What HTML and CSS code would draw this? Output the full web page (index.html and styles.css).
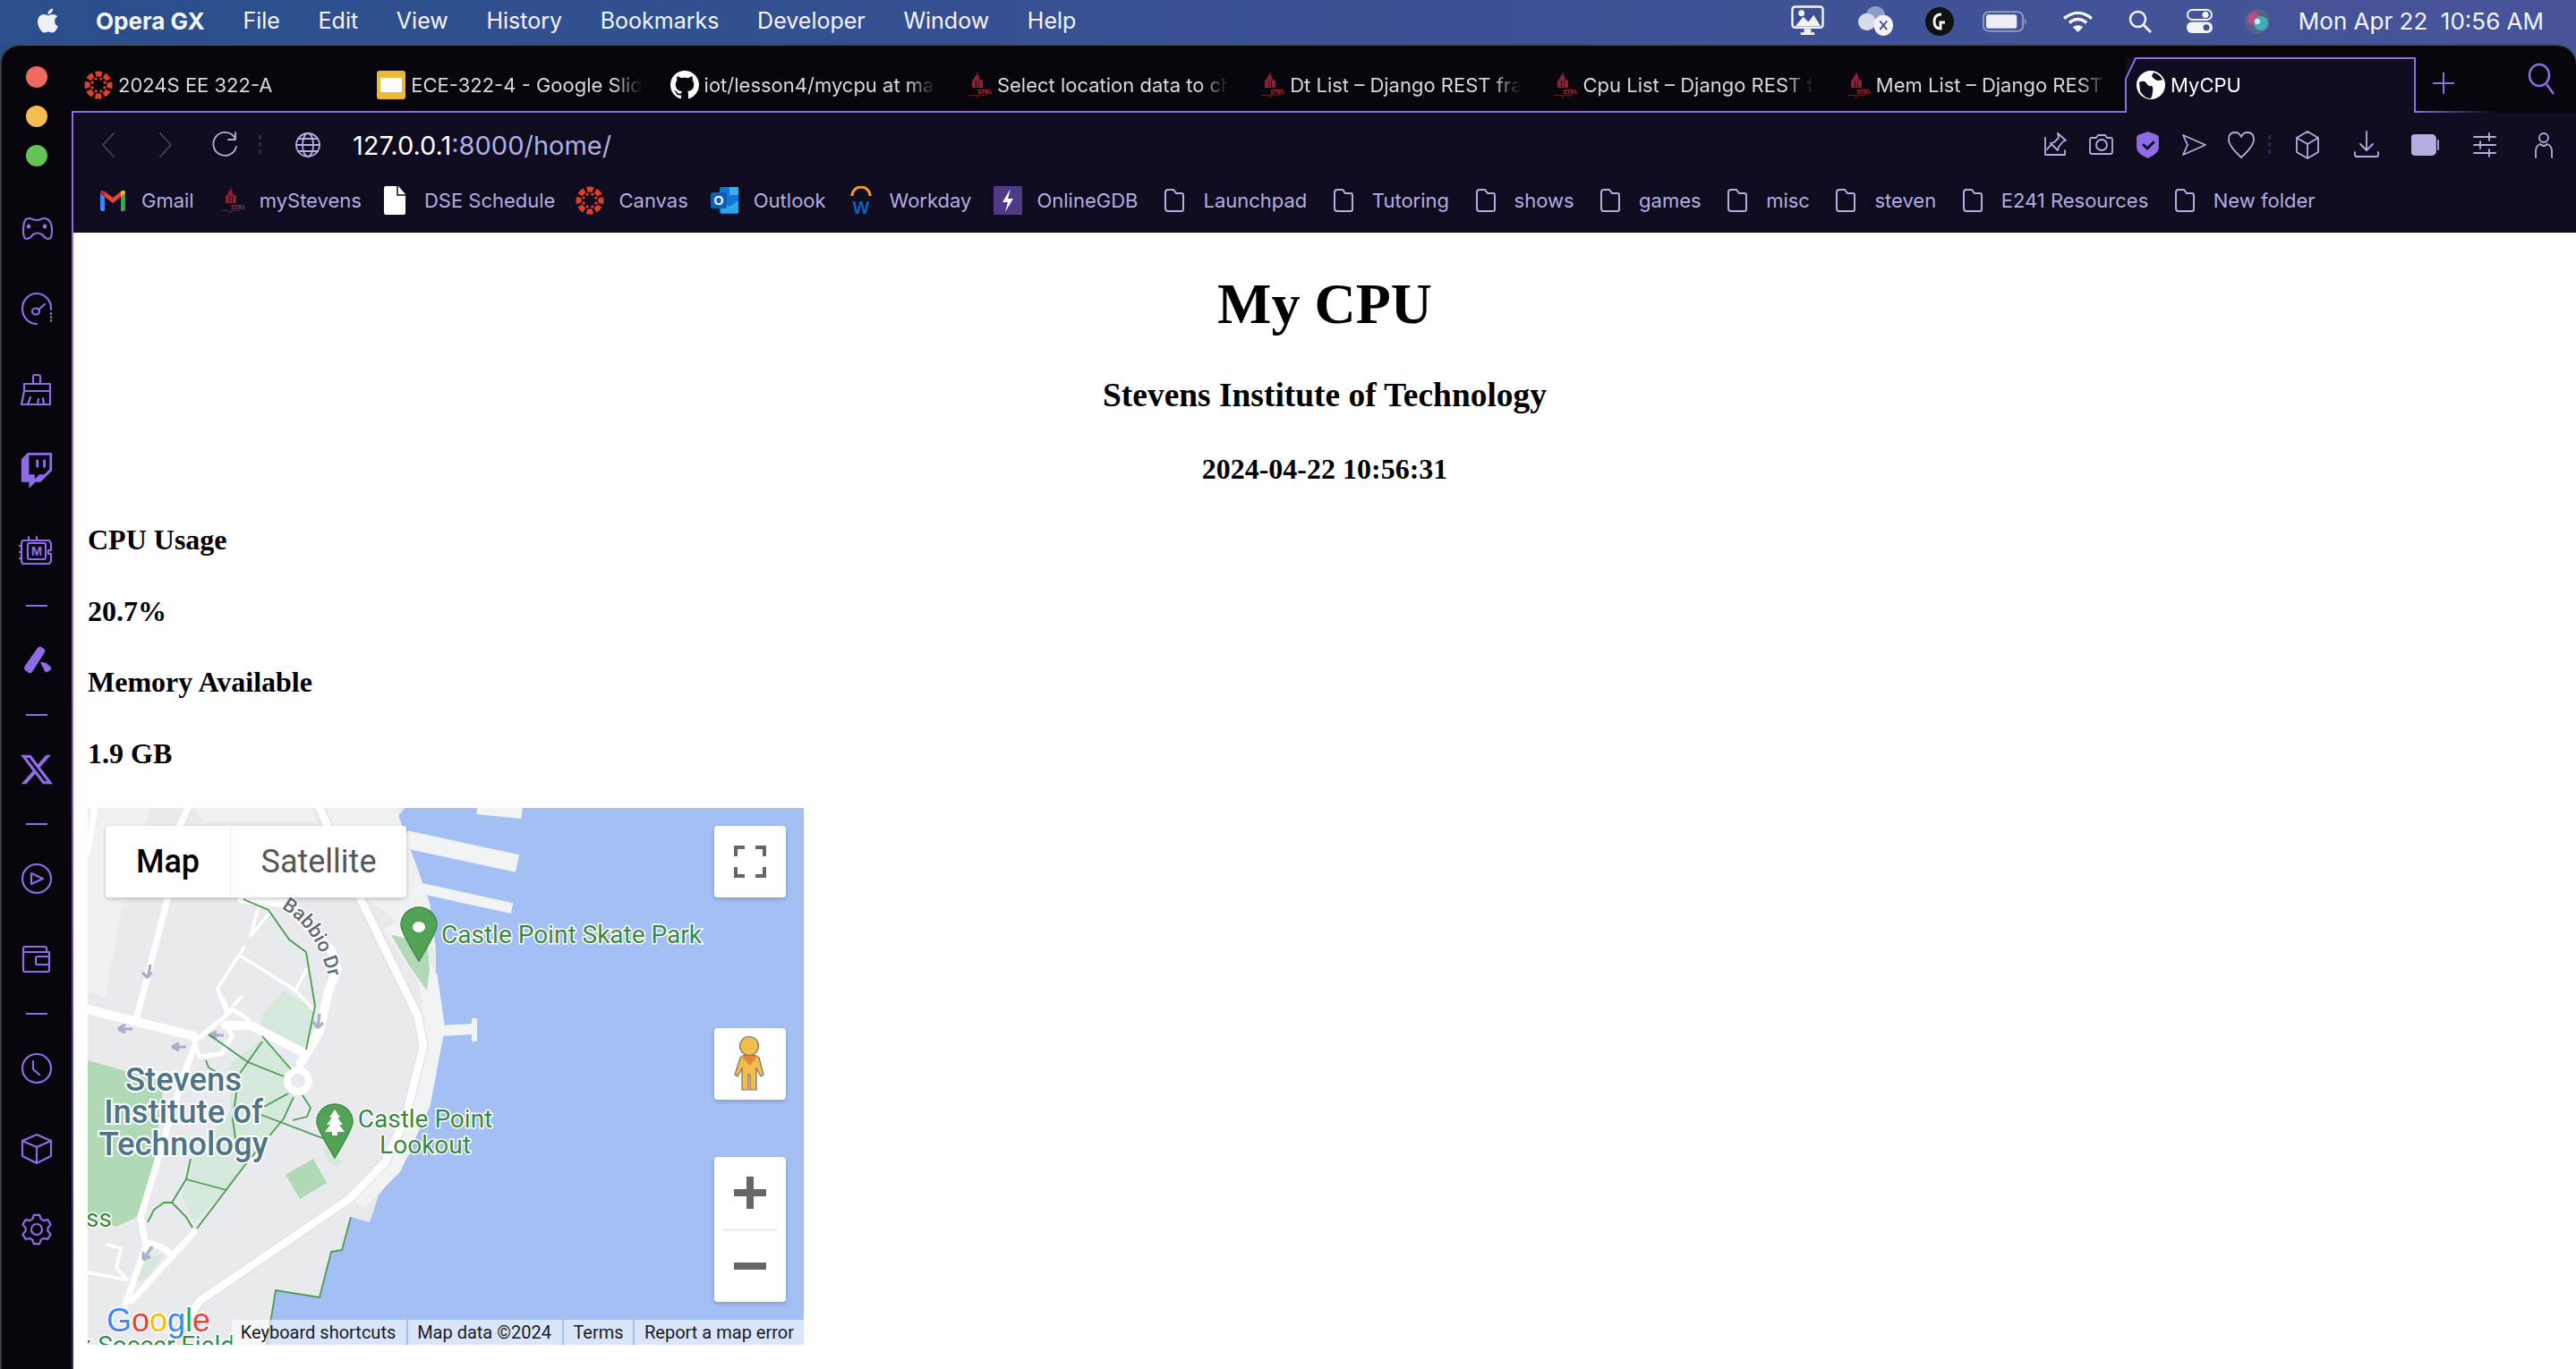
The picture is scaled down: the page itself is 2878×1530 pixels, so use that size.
FILE: index.html
```html
<!DOCTYPE html>
<html lang="en">
<head>
<meta charset="utf-8">
<title>MyCPU</title>
<link rel="stylesheet" href="styles.css">
</head>
<body>
<svg class="defs" width="0" height="0" aria-hidden="true">
  <defs>
    <symbol id="canvas" viewBox="0 0 32 32">
      <circle cx="16" cy="16" r="12.500" fill="none" stroke="#e13f2b" stroke-width="6" stroke-dasharray="6.800 3" stroke-dashoffset="23"/>
      <g fill="#e13f2b"><circle cx="22.900" cy="18.900" r="1.600"/><circle cx="22.900" cy="13.100" r="1.600"/><circle cx="9.100" cy="18.900" r="1.600"/><circle cx="9.100" cy="13.100" r="1.600"/><circle cx="18.900" cy="22.900" r="1.600"/><circle cx="13.100" cy="22.900" r="1.600"/><circle cx="18.900" cy="9.100" r="1.600"/><circle cx="13.100" cy="9.100" r="1.600"/></g>
    </symbol>
    <symbol id="stevens" viewBox="0 0 32 32">
      <path d="M16 0l1 5 1 1v3l4 2v8H10v-8l3-3V6l2-1z" fill="#8f1f30"/>
      <path d="M14 11h1v7h-1zM17 11h1v7h-1z" fill="#120a14"/>
      <text x="16" y="25.500" class="stevens-word" textLength="31">STEVENS</text>
      <rect x="6" y="27" width="20" height="1" fill="#5a1a26"/><rect x="14" y="29" width="4" height="1" fill="#5a1a26"/>
    </symbol>
    <symbol id="folder" viewBox="0 0 24 28">
      <path d="M2 5a3 3 0 0 1 3-3h6l3 4h6a2 2 0 0 1 2 2v16a2 2 0 0 1-2 2H5a3 3 0 0 1-3-3z" fill="none" stroke="#b3aee0" stroke-width="2"/>
    </symbol>
    <symbol id="pegman" viewBox="0 0 80 80">
      <path d="M29 33q3-3 8-3h5q5 0 8 3l5 19-3 2-5-9v24h-7V52h-2v17h-7V45l-5 9-3-2z" fill="#f2bd4a" stroke="#77736a" stroke-width="1.200"/>
      <path d="M30 31h19l-9.500 11z" fill="#dd8a3c"/>
      <circle cx="39" cy="20" r="10.500" fill="#f2bd4a" stroke="#77736a" stroke-width="1.200"/>
    </symbol>
  </defs>
</svg>

<header class="menubar">
  <svg class="apple" viewBox="3 3 18 18"><path d="M17.050 20.280c-.98.95-2.050.8-3.080.35-1.090-.46-2.090-.48-3.240 0-1.440.62-2.200.44-3.060-.35C2.790 15.250 3.510 7.590 9.050 7.310c1.350.07 2.290.74 3.080.8 1.180-.24 2.310-.93 3.570-.84 1.510.12 2.650.72 3.400 1.800-3.120 1.870-2.380 5.980.48 7.130-.57 1.500-1.310 2.990-2.540 4.090zM12.030 7.250c-.15-2.230 1.660-4.070 3.740-4.250.29 2.580-2.340 4.500-3.740 4.250z"/></svg>
  <nav class="menus">
    <span class="menu-app">Opera GX</span>
    <span>File</span><span>Edit</span><span>View</span><span>History</span><span>Bookmarks</span><span>Developer</span><span>Window</span><span>Help</span>
  </nav>
  <div class="tray">
    <svg class="tray-mon" viewBox="0 0 38 36"><rect x="1.500" y="1.500" width="35" height="24" rx="3" fill="#3f4f93" stroke="#f2f2f7" stroke-width="2.500"/><path d="M5 24l9-11 6 6 6-8 8 13z" fill="#f2f2f7"/><circle cx="12" cy="9" r="3.500" fill="#f2f2f7"/><path d="M15 27h8v4h4v3H11v-3h4z" fill="#f2f2f7"/></svg>
    <svg class="tray-cloud" viewBox="0 0 42 36"><circle cx="21" cy="12" r="11" fill="#8f9cc9"/><circle cx="11" cy="19" r="10" fill="#d7dbeb"/><ellipse cx="30" cy="23" rx="11" ry="12" fill="#f2f2f7"/><path d="M26 18l8 10M34 18l-8 10" stroke="#3f4f93" stroke-width="2" fill="none"/></svg>
    <svg class="tray-g" viewBox="0 0 32 32"><circle cx="16" cy="16" r="16" fill="#111"/><path d="M18 8q-8 0-8 8t7 8v-7h5" fill="none" stroke="#f2f2f7" stroke-width="3"/></svg>
    <svg class="tray-batt" viewBox="0 0 52 24"><rect x="1" y="1" width="45" height="22" rx="6" fill="none" stroke="#a6abd0" stroke-width="1.500"/><rect x="4" y="4" width="35" height="16" rx="3" fill="#eeeef6"/><path d="M48 8q3 4 0 8z" fill="#a6abd0"/></svg>
    <svg class="tray-wifi" viewBox="0 0 36 26"><path d="M2 10q16-13 32 0M8 15q10-8 20 0" fill="none" stroke="#f7f7fb" stroke-width="3.500"/><path d="M12 20q6-4 12 0l-6 6z" fill="#f7f7fb"/></svg>
    <svg class="tray-search" viewBox="0 0 26 26"><circle cx="10.500" cy="10.500" r="8.500" fill="none" stroke="#f2f2f7" stroke-width="2.500"/><path d="M17 17l8 8" stroke="#f2f2f7" stroke-width="3"/></svg>
    <svg class="tray-ctrl" viewBox="0 0 29 27"><rect x="1" y="1" width="27" height="11" rx="5.500" fill="none" stroke="#f2f2f7" stroke-width="2"/><circle cx="21" cy="6.500" r="3.500" fill="#f2f2f7"/><rect x="0" y="14.500" width="29" height="12.500" rx="6" fill="#f2f2f7"/><circle cx="22" cy="20.700" r="3.500" fill="#3f4f93"/></svg>
    <svg class="tray-siri" viewBox="0 0 28 28"><circle cx="14" cy="14" r="14" fill="#5a5f88"/><circle cx="10" cy="11" r="7" fill="#c2468c"/><circle cx="18" cy="16" r="8" fill="#3bb0b8"/><circle cx="14" cy="14" r="3" fill="#e6e9f5"/></svg>
    <span class="clock">Mon Apr 22&nbsp;&nbsp;10:56 AM</span>
  </div>
</header>

<div class="window">
  <aside class="side">
    <div class="lights"><i class="light light-red"></i><i class="light light-yellow"></i><i class="light light-green"></i></div>
    <svg class="side-icon" viewBox="0 0 40 40"><path d="M8 9q4-2 7 0 5 2 10 0 3-2 7 0 5 3 5 13 0 9-4 9-3 0-7-5-5-3-10 0-4 5-7 5-4 0-4-9 0-10 3-13z"/><circle cx="11" cy="17" r="1.300" class="dot"/><circle cx="29" cy="17" r="1.300" class="dot"/></svg>
    <svg class="side-icon" viewBox="0 0 40 40"><path d="M36 20A16 17 0 1 0 20 36"/><ellipse cx="19" cy="22" rx="4" ry="3.500"/><path d="M22 20l7-6"/><path d="M36 24v1M36 28v1M36 32v1"/></svg>
    <svg class="side-icon" viewBox="0 0 40 40"><rect x="16" y="3" width="8" height="10" rx="2"/><path d="M6 13h29v8H6zM6 21l-3 15h32V21M10 36l3-8M21 36l1-6M28 36l-1-7"/></svg>
    <svg class="side-icon side-fill" viewBox="0 0 24 24"><path d="M11.571 4.714h1.715v5.143H11.570zm4.715 0H18v5.143h-1.714zM6 0L1.714 4.286v15.428h5.143V24l4.286-4.286h3.428L22.286 12V0zm14.571 11.143l-3.428 3.428h-3.429l-3 3v-3H6.857V1.714h13.714Z"/></svg>
    <svg class="side-icon" viewBox="0 0 40 40"><path d="M4 8h30l2 3v8h-3v4h3v8l-2 3H4l-1-3V11z"/><rect x="10" y="11" width="20" height="18" rx="2"/><path d="M3 14H0M3 21H0M3 28H0M11 8V4M20 8V4"/><text x="20" y="25" class="ram-letter">M</text></svg>
    <i class="side-sep"></i>
    <svg class="side-icon side-fill" viewBox="0 0 40 40"><path d="M7 26L21 6q2-2 4-1l3 2q2 2 1 4L15 33q-2 2-4 1l-4-3q-2-2 0-5z"/><path d="M24 22q7-1 12 6 1 2-1 3l-3 2q-2 1-3-1z"/></svg>
    <i class="side-sep"></i>
    <svg class="side-icon side-fill" viewBox="0 0 24 24"><path d="M18.244 2.250h3.308l-7.227 8.260 8.502 11.240H16.170l-5.214-6.817L4.990 21.750H1.680l7.730-8.835L1.254 2.250H8.080l4.713 6.231zm-1.161 17.520h1.833L7.084 4.126H5.117z"/></svg>
    <i class="side-sep"></i>
    <svg class="side-icon" viewBox="0 0 40 40"><circle cx="20" cy="20" r="16"/><path d="M14 14l13 6-13 6z"/></svg>
    <svg class="side-icon" viewBox="0 0 40 40"><path d="M31 12V8q0-2-2-2H7q-2 0-2 2v24q0 2 2 2h25q2 0 2-2V12H7"/><rect x="19" y="17" width="15" height="9" rx="2"/></svg>
    <i class="side-sep"></i>
    <svg class="side-icon" viewBox="0 0 40 40"><circle cx="20" cy="20" r="16"/><path d="M16 12v9l7 6"/></svg>
    <svg class="side-icon" viewBox="0 0 40 40"><path d="M20 4l16 7v17l-16 8-16-8V11zM4 11l16 7 16-7M20 18v18"/></svg>
    <svg class="side-icon" viewBox="0 0 40 40"><path d="M15.300 8.400L16.850 3.800H23.150L24.700 8.400L27.700 10.150L32.450 9.200L35.600 14.600L32.400 18.260V21.740L35.600 25.400L32.450 30.800L27.700 29.850L24.700 31.600L23.150 36.200H16.850L15.300 31.600L12.300 29.850L7.550 30.800L4.400 25.400L7.600 21.740V18.260L4.400 14.600L7.550 9.200L12.300 10.150z"/><circle cx="20" cy="20" r="6"/></svg>
  </aside>

  <div class="main">
    <div class="tabstrip">
      <div class="tab"><svg class="fav"><use href="#canvas"/></svg><span class="tab-title">2024S EE 322-A</span></div>
      <div class="tab"><svg class="fav" viewBox="0 0 32 32"><rect width="32" height="32" rx="3" fill="#eab93a"/><rect x="4" y="8" width="24" height="16" fill="#fff"/></svg><span class="tab-title">ECE-322-4 - Google Slides</span></div>
      <div class="tab"><svg class="fav" viewBox="0 0 16 16"><path fill="#fff" d="M8 0C3.580 0 0 3.580 0 8c0 3.540 2.290 6.530 5.470 7.590.4.070.55-.17.55-.38 0-.19-.01-.82-.01-1.490-2.010.37-2.530-.49-2.690-.94-.09-.23-.48-.94-.82-1.130-.28-.15-.68-.52-.01-.53.63-.01 1.080.58 1.230.82.72 1.210 1.870.87 2.330.66.070-.52.28-.87.51-1.070-1.780-.2-3.640-.89-3.640-3.950 0-.87.31-1.590.82-2.150-.08-.2-.36-1.020.08-2.120 0 0 .67-.21 2.200.82.64-.18 1.320-.27 2-.27.68 0 1.360.09 2 .27 1.530-1.040 2.200-.82 2.200-.82.44 1.100.16 1.920.08 2.120.51.56.82 1.270.82 2.150 0 3.070-1.870 3.750-3.650 3.950.29.25.54.73.54 1.480 0 1.070-.01 1.930-.01 2.200 0 .21.15.46.55.38A8.013 8.013 0 0016 8c0-4.420-3.580-8-8-8z"/></svg><span class="tab-title">iot/lesson4/mycpu at master · steven</span></div>
      <div class="tab"><svg class="fav"><use href="#stevens"/></svg><span class="tab-title">Select location data to change</span></div>
      <div class="tab"><svg class="fav"><use href="#stevens"/></svg><span class="tab-title">Dt List – Django REST framework</span></div>
      <div class="tab"><svg class="fav"><use href="#stevens"/></svg><span class="tab-title">Cpu List – Django REST framework</span></div>
      <div class="tab"><svg class="fav"><use href="#stevens"/></svg><span class="tab-title">Mem List – Django REST framework</span></div>
      <div class="tab tab-active">
        <svg class="tab-outline" viewBox="0 0 324 62" preserveAspectRatio="none"><path d="M-6 61H0V24L11 1H323V61H330" fill="none" stroke="#8f6be6" stroke-width="2"/></svg>
        <svg class="fav" viewBox="0 0 32 32"><circle cx="16" cy="16" r="16" fill="#fff"/><path d="M3 13q6-3 8 1t5 3 2 7-3 7Q8 30 4 23zM19 2q7 2 10 8-5 2-8 0t-4-4z" fill="#0e0c1e"/></svg>
        <span class="tab-title tab-title-active">MyCPU</span>
      </div>
      <svg class="tab-plus" viewBox="0 0 26 26"><path d="M13 1v24M1 13h24"/></svg>
      <svg class="tab-search" viewBox="0 0 30 36"><ellipse cx="13" cy="14" rx="11" ry="12"/><path d="M21 24l8 11"/></svg>
    </div>

    <div class="pane">
      <div class="toolbar">
        <div class="address-row">
          <svg class="tool tool-dim" viewBox="0 0 32 32"><path d="M22 3L10 16l12 13"/></svg>
          <svg class="tool tool-dim tool-forward" viewBox="0 0 32 32"><path d="M10 3l12 13-12 13"/></svg>
          <svg class="tool tool-reload" viewBox="0 0 32 32"><path d="M27 9a13 13 0 1 0 1 9M27 2v8h-8"/></svg>
          <i class="vdots vdots-left"></i>
          <svg class="tool tool-globe" viewBox="0 0 32 32"><circle cx="16" cy="16" r="13"/><ellipse cx="16" cy="16" rx="6" ry="13"/><path d="M3 16h26M5 9h22M5 23h22"/></svg>
          <div class="url"><b>127.0.0.1</b>:8000/home/</div>
          <div class="tools-a">
            <svg class="tool" viewBox="0 0 32 32"><path d="M5 8v19h22v-5M19 3l9 8-3 1-5 6-1 4-8-8 4-1 5-5zM12 15l-5 6"/></svg>
            <svg class="tool" viewBox="0 0 32 32"><path d="M3 10q0-2 2-2h5l2-3h8l2 3h4q2 0 2 2v14q0 2-2 2H5q-2 0-2-2z"/><circle cx="16" cy="16" r="6"/></svg>
            <svg class="tool" viewBox="0 0 32 32"><path class="shield" d="M15.500 2l9 3q2.500 1 2.500 3v11q0 6-11.500 11Q4 25 4 19V8q0-2 2.500-3z"/><path class="shield-check" d="M11 16l4 4 7-7"/></svg>
            <svg class="tool" viewBox="0 0 32 32"><path d="M3 5l25 11L3 27l5-11z"/></svg>
            <svg class="tool" viewBox="0 0 32 32"><path d="M16 30Q2 17 2 10 2 2 9 2q5 0 7 5 2-5 7-5 7 0 7 8 0 7-14 20z"/></svg>
          </div>
          <i class="vdots vdots-right"></i>
          <div class="tools-b">
            <svg class="tool" viewBox="0 0 32 32"><path d="M16 1l12 7v16l-12 7-12-7V8zM4 8l12 7 12-7M16 15v16"/></svg>
            <svg class="tool" viewBox="0 0 32 32"><path d="M16 1v21M9 15l7 7 7-7M3 24v3q0 2 2 2h22q2 0 2-2v-3"/></svg>
            <svg class="tool" viewBox="0 0 32 32"><rect class="batt" x="0" y="5" width="27" height="22" rx="4"/><path d="M30 11v10"/></svg>
            <svg class="tool" viewBox="0 0 32 32"><path d="M4 7h24M4 16h24M4 25h24M21 3v8M11 12v8M21 21v8"/></svg>
            <svg class="tool" viewBox="0 0 32 32"><circle cx="16" cy="8" r="5"/><path d="M7 30v-7q0-6 5-8 4 4 8 0 5 2 5 8v7"/></svg>
          </div>
        </div>
        <div class="bookmarks">
          <a class="bm"><svg class="bm-icon" viewBox="0 0 28 24"><path d="M0 4l5 4v16H2q-2 0-2-2z" fill="#4285f4"/><path d="M28 4l-5 4v16h3q2 0 2-2z" fill="#34a853"/><path d="M5 8V2l9 7 9-7v6l-9 7z" fill="#ea4335"/><path d="M0 4q0-4 3-3l2 1v6z" fill="#c5221f"/><path d="M28 4q0-4-3-3l-2 1v6z" fill="#fbbc04"/></svg>Gmail</a>
          <a class="bm"><svg class="bm-icon bm-icon-tall"><use href="#stevens"/></svg>myStevens</a>
          <a class="bm bm-doc"><svg class="bm-icon bm-icon-doc" viewBox="0 0 24 32"><path d="M2 0h14l8 9v21q0 2-2 2H2q-2 0-2-2V2q0-2 2-2z" fill="#fff"/><path d="M15 0v10h9" fill="none" stroke="#0e0c1e" stroke-width="1.500"/></svg>DSE Schedule</a>
          <a class="bm"><svg class="bm-icon bm-icon-tall"><use href="#canvas"/></svg>Canvas</a>
          <a class="bm"><svg class="bm-icon bm-icon-tall" viewBox="0 0 32 32"><rect x="10" y="1" width="21" height="30" rx="2" fill="#0f78d4"/><path d="M21 1h10v9H21z" fill="#35aeea"/><path d="M10 16l11 7 10-7v14H12z" fill="#28a8ea"/><rect y="7" width="18" height="18" rx="2" fill="#0a5fb3"/><text x="9" y="21" class="outlook-letter">O</text></svg>Outlook</a>
          <a class="bm"><svg class="bm-icon" viewBox="0 0 26 32"><path d="M3 11a10 10 0 0 1 20 0" fill="none" stroke="#f19a2a" stroke-width="3"/><text x="13" y="31" class="workday-letter">W</text></svg>Workday</a>
          <a class="bm bm-gdb"><svg class="bm-icon bm-icon-tall" viewBox="0 0 32 32"><rect width="32" height="32" fill="#4f3b85"/><path d="M19 3l-9 15h6l-3 11 9-15h-6z" fill="#fff"/></svg>OnlineGDB</a>
          <a class="bm bm-dir"><svg class="bm-folder"><use href="#folder"/></svg>Launchpad</a>
          <a class="bm bm-dir"><svg class="bm-folder"><use href="#folder"/></svg>Tutoring</a>
          <a class="bm bm-dir"><svg class="bm-folder"><use href="#folder"/></svg>shows</a>
          <a class="bm bm-dir"><svg class="bm-folder"><use href="#folder"/></svg>games</a>
          <a class="bm bm-dir"><svg class="bm-folder"><use href="#folder"/></svg>misc</a>
          <a class="bm bm-dir"><svg class="bm-folder"><use href="#folder"/></svg>steven</a>
          <a class="bm bm-dir"><svg class="bm-folder"><use href="#folder"/></svg>E241 Resources</a>
          <a class="bm bm-dir"><svg class="bm-folder"><use href="#folder"/></svg>New folder</a>
        </div>
      </div>

      <main class="page">
        <h1>My CPU</h1>
        <h3>Stevens Institute of Technology</h3>
        <h4 class="center">2024-04-22 10:56:31</h4>
        <h4>CPU Usage</h4>
        <h4>20.7%</h4>
        <h4>Memory Available</h4>
        <h4>1.9 GB</h4>
        <div class="map">
          <svg class="map-art" viewBox="0 0 800 600" width="800" height="600">
            <rect width="800" height="600" class="water"/>
            <path class="land" d="M0 0H354L345 12L355 33L364 55L375 86L382 106L389 159L389 221L395 245L394 266L382 327L359 388L325 433L315 463L294 457L284 494L272 496L259 547L210 539L200 600H0Z"/>
            <path class="land-light" d="M0 0H70L40 100L20 212L0 205ZM262 0H345L355 33L382 106L389 159L310 100ZM120 0H250L255 15H130Z"/>
            <path class="shore" d="M340 130L380 190L388 245L372 330L340 400L300 440"/>
            <path class="pier" d="M364 88L474 112M435 1L485 6M395 249L430 247"/>
            <path class="pier-wide" d="M355 35L480 62"/>
            <path class="pier-cap" d="M429 235h6v26h-6z"/>
            <path class="park" d="M0 282L85 306L75 396L55 457L32 468L0 457ZM215 219L225 229L214 241L204 233ZM252 392L267 419L237 437L221 410Z"/>
            <path class="park" d="M339 142L379 151L382 180L379 204L359 176Z"/>
            <path class="park-light" d="M219 204L252 225L242 270L195 255L194 233ZM159 286L195 257L235 298L225 335L179 396L152 429L119 463L105 433L119 388L159 339ZM54 531L64 504L85 498L69 523ZM263 380L285 395L277 402L265 390Z"/>
            <path class="road-case" d="M259 0L305 102L369 233L375 266L355 347L332 396L292 437L125 551L90 600"/>
            <path class="road road-main" d="M259 0L305 102L369 233L375 266L355 347L332 396L292 437L125 551L90 600"/>
            <path class="road road-mid" d="M0 225L119 255M154 243L182 243L242 274M259 249L269 204L279 180L272 159L219 106L172 102M259 249L238 285"/>
            <path class="road road-side" d="M89 102L55 233M112 0L102 21M8 0L0 49M120 265L105 305L59 457L65 490L42 555M119 474L49 551M65 486Q82 488 92 498"/>
            <path class="road road-loop" d="M119 261L125 278L149 275L162 255L154 243M119 261L139 245L162 225L179 236"/>
            <path class="road road-thin" d="M145 202L175 155M172 166L232 204L252 225M145 202L155 229M232 204L245 180M192 106L182 143L205 115M0 519L42 527M22 488L37 492L32 514L44 527M151 212L158 228M163 220L172 211"/>
            <circle class="road-ring" cx="235" cy="305" r="12"/>
            <path class="arrow" d="M70 175L67 190M67 190l-6-6M67 190l4-7M50 247H34M34 247l8-5M34 247l8 4M110 267H94M94 267l8-4M94 267l8 4M152 254H136M136 254l8-4M136 254l8 4M259 230L257 246M257 246l-5-7M257 246l6-6M72 490L62 505M62 505l0-9M62 505l8-4"/>
            <path class="trail" d="M174 102L202 114L225 147L244 161L254 221L244 270M135 253L179 284L219 300M195 255L227 292M195 261L169 298L162 347L165 370M224 319L195 335M194 343L265 370M230 323L219 347L175 400L122 470M240 321L249 335L245 345L229 349M115 392L110 415L94 441L85 441L74 449L67 463M110 415L155 427M94 441L110 457L117 469M132 282L135 290L160 305M294 457L284 494L272 496L259 547L210 539L200 600"/>
            <text x="107" y="316" class="label-campus">Stevens</text>
            <text x="107" y="352" class="label-campus">Institute of</text>
            <text x="107" y="388" class="label-campus">Technology</text>
            <text x="395" y="151" class="label-poi">Castle Point Skate Park</text>
            <text x="377" y="357" class="label-poi label-mid">Castle Point</text>
            <text x="377" y="386" class="label-poi label-mid">Lookout</text>
            <text x="-2" y="468" class="label-poi">ss</text>
            <path id="babbio" d="M216 112Q262 138 272 206" fill="none"/>
            <text class="label-road"><textPath href="#babbio">Babbio Dr</textPath></text>
            <path class="pin" d="M370 171Q350 138 350 131a20 20 0 0 1 40 0Q390 138 370 171z"/>
            <ellipse cx="370" cy="133" rx="7" ry="6" class="pin-hole"/>
            <path class="pin" d="M276 391Q256 358 256 351a20 20 0 0 1 40 0Q296 358 276 391z"/>
            <path class="pin-hole" d="M276 337l6 9h-3l6 8h-4l6 8h-8v4h-6v-4h-8l6-8h-4l6-8h-3z"/>
            <text x="-10" y="610" class="label-poi">k Soccer Field</text>
            <text x="21" y="585" class="google"><tspan class="g-blue">G</tspan><tspan class="g-red">o</tspan><tspan class="g-yellow">o</tspan><tspan class="g-blue">g</tspan><tspan class="g-green">l</tspan><tspan class="g-red">e</tspan></text>
          </svg>
          <div class="map-type">
            <span class="map-tab map-tab-on">Map</span><span class="map-tab map-tab-sat">Satellite</span>
          </div>
          <div class="map-btn map-full">
            <svg viewBox="0 0 80 80" width="80" height="80"><path class="glyph" d="M22 34V22H34V26H26V34ZM46 22H58V34H54V26H46ZM22 46H26V54H34V58H22ZM54 46H58V58H46V54H54Z"/></svg>
          </div>
          <div class="map-btn map-peg"><svg width="80" height="80"><use href="#pegman"/></svg></div>
          <div class="map-btn map-zoom">
            <svg viewBox="0 0 80 162" width="80" height="162"><path class="glyph" d="M36 22H44V36H58V44H44V58H36V44H22V36H36ZM22 118H58V126H22Z"/><path d="M10 81.500H70" stroke="#e6e6e6" stroke-width="2"/></svg>
          </div>
          <div class="map-foot">
            <span class="foot-k">Keyboard shortcuts</span><span class="foot-d">Map data ©2024</span><span class="foot-t">Terms</span><span class="foot-r">Report a map error</span>
          </div>
        </div>
      </main>
    </div>
  </div>
</div>
</body>
</html>
```
FILE: styles.css
```css
* { box-sizing: border-box; }
html, body { margin: 0; height: 1530px; overflow: hidden; }
body {
  display: flex; flex-direction: column;
  background: linear-gradient(90deg, #294f8c 0%, #3b5195 55%, #47549a 100%);
  font-family: Inter, "Liberation Sans", sans-serif;
}
.defs { position: absolute; }

/* macOS menu bar */
.menubar { height: 49px; flex: none; display: flex; align-items: center; color: #f4f4fa; font-size: 25px; padding: 0 36px 2px 40px; }
.apple { width: 27px; height: 32px; fill: #eef0f6; flex: none; margin-bottom: 1px; }
.menus { display: flex; gap: 42.700px; margin-left: 40px; white-space: nowrap; }
.menu-app { font-weight: 700; font-size: 26px; }
.tray { margin-left: auto; display: flex; align-items: center; font-size: 26px; }
.tray svg { flex: none; }
.tray-mon { width: 37px; height: 35px; margin-right: 37px; }
.tray-cloud { width: 41px; height: 35px; margin-right: 35px; }
.tray-g { width: 32px; height: 32px; margin-right: 32px; }
.tray-batt { width: 51px; height: 24px; margin-right: 38px; }
.tray-wifi { width: 35px; height: 25px; margin-right: 39px; }
.tray-search { width: 26px; height: 26px; margin-right: 39px; }
.tray-ctrl { width: 29px; height: 27px; margin-right: 36px; }
.tray-siri { width: 28px; height: 28px; margin-right: 32px; }
.clock { white-space: pre; }

/* window */
.window { flex: 1; display: flex; min-height: 0; background: #07060c; border-top: 2px solid #4b4b50; border-left: 2px solid #3a3a3e; border-radius: 22px 22px 0 0; overflow: hidden; }
.side { width: 78px; flex: none; display: flex; flex-direction: column; align-items: center; gap: 50px; padding-top: 23px; }
.lights { display: flex; flex-direction: column; gap: 20px; }
.light { width: 24px; height: 24px; border-radius: 50%; display: block; }
.light-red { background: #ee6a5f; }
.light-yellow { background: #f5bd4f; }
.light-green { background: #61c454; }
.side-icon { width: 40px; height: 40px; flex: none; fill: none; stroke: #8f6be6; stroke-width: 2.200; stroke-linejoin: round; stroke-linecap: round; }
.side-fill { fill: #8f6be6; stroke: none; }
.side-icon .dot { fill: #8f6be6; }
.ram-letter { font: 700 13px Inter, sans-serif; fill: #8f6be6; stroke: none; text-anchor: middle; }
.side-sep { width: 24px; height: 2px; flex: none; background: #8f6be6; margin: -10px 0; }

.main { flex: 1; min-width: 0; display: flex; flex-direction: column; }

/* tab strip */
.tabstrip { height: 75px; flex: none; display: flex; align-items: flex-end; padding-left: 2px; background: linear-gradient(90deg, #8f6be6 0, #8f6be6 2618px, transparent 2710px) left bottom / 100% 2px no-repeat; }
.tab { width: 327.300px; height: 60px; flex: none; display: flex; align-items: center; gap: 6px; padding: 0 0 2px 12px; font-size: 22px; color: #d9d7de; white-space: nowrap; }
.fav { width: 32px; height: 32px; flex: none; }
.tab-title { width: 258px; overflow: hidden; -webkit-mask-image: linear-gradient(90deg, #000 88%, transparent); mask-image: linear-gradient(90deg, #000 88%, transparent); }
.tab-active { width: 324px; height: 62px; margin-left: 2px; position: relative; background: #0e0c1e; padding: 0 0 0 12px; z-index: 1; color: #fff; }
.tab-outline { position: absolute; inset: 0; width: 100%; height: 100%; overflow: visible; }
.tab-title-active { position: relative; }
.tab-plus { width: 26px; height: 26px; margin: 0 0 20px 18px; flex: none; fill: none; stroke: #8f6be6; stroke-width: 2; }
.tab-search { width: 30px; height: 36px; margin: 0 24px 20px auto; flex: none; fill: none; stroke: #8f6be6; stroke-width: 2.500; }

.pane { flex: 1; min-height: 0; display: flex; flex-direction: column; border-left: 2px solid; border-image: linear-gradient(180deg, #8f6be6 0%, #8f6be6 45%, #3d2c66 100%) 1; }

/* toolbar */
.toolbar { height: 134px; flex: none; background: #0e0c1e; padding: 0 20px 0 23px; }
.address-row { height: 72px; display: flex; align-items: center; }
.tool { width: 32px; height: 32px; flex: none; fill: none; stroke: #b3aee0; stroke-width: 1.800; stroke-linejoin: round; stroke-linecap: round; }
.tool-dim { stroke: #47435f; }
.tool-forward { margin-left: 32px; }
.tool-reload { margin-left: 35px; }
.tool-globe { margin-left: 34px; }
.vdots { width: 3px; height: 22px; flex: none; background: repeating-linear-gradient(180deg, #2a2746 0 5px, transparent 5px 8px); }
.vdots-left { margin: 0 2px 0 21px; }
.vdots-right { margin: 0 25px 0 14px; }
.url { margin-left: 34px; font-size: 29px; color: #b3aee0; white-space: nowrap; }
.url b { font-weight: 400; color: #fff; }
.tools-a { margin-left: auto; display: flex; gap: 20px; }
.tools-b { display: flex; gap: 34px; }
.shield { fill: #8f6be6; stroke: #8f6be6; }
.shield-check { stroke: #0e0c1e; stroke-width: 3; }
.batt { fill: #b3aee0; }

.bookmarks { height: 52px; display: flex; align-items: center; gap: 25px; padding-left: 7px; font-size: 22px; color: #b3aee0; white-space: nowrap; }
.bm { display: flex; align-items: center; }
.bm-icon { width: 28px; height: 32px; flex: none; margin-right: 18px; }
.bm-icon-tall { width: 32px; margin-right: 16px; }
.bm-icon-doc { width: 24px; margin-right: 21px; }
.bm-doc { margin-right: -2px; }
.bm-gdb { margin-right: 4px; }
.bm-dir { margin-right: 3.500px; }
.bm-folder { width: 24px; height: 28px; flex: none; margin-right: 20px; }
.stevens-word { font: 700 7.500px "Liberation Sans", sans-serif; fill: #a62a3c; }
.outlook-letter { font: 700 14px "Liberation Sans", sans-serif; fill: #fff; text-anchor: middle; }
.workday-letter { font: 700 20px "Liberation Sans", sans-serif; fill: #0f5fb8; text-anchor: middle; }

/* page */
.page { flex: 1; min-height: 0; background: #fff; padding: 0 16px; color: #000; font-family: "Liberation Serif", serif; overflow: hidden; }
h1 { font-size: 64px; font-weight: 700; text-align: center; margin: 43px 0; }
h3 { font-size: 37.440px; font-weight: 700; text-align: center; margin: 37.440px 0; }
h4 { font-size: 32px; font-weight: 700; margin: 42.560px 0; }
.center { text-align: center; }

/* map */
.map { position: relative; width: 800px; height: 600px; overflow: hidden; font-family: Roboto, sans-serif; }
.map-art { display: block; }
.water { fill: #a3bff4; }
.land { fill: #e8eaed; }
.land-light { fill: #eff1f2; }
.shore { fill: none; stroke: #f1f3f4; stroke-width: 22; }
.pier { fill: none; stroke: #f1f3f4; stroke-width: 12; }
.pier-wide { fill: none; stroke: #f1f3f4; stroke-width: 20; }
.pier-cap { fill: #f1f3f4; }
.park { fill: #b0d9b5; }
.park-light { fill: #d4e8dc; }
.road { fill: none; stroke: #fff; stroke-linejoin: round; stroke-linecap: round; }
.road-case { fill: none; stroke: #dadce0; stroke-width: 11; stroke-linejoin: round; }
.road-main { stroke-width: 9; }
.road-mid { stroke-width: 10; }
.road-side { stroke-width: 7; }
.road-loop { stroke-width: 5; }
.road-thin { stroke-width: 3.500; }
.road-ring { fill: #e8eaed; stroke: #fff; stroke-width: 8; }
.arrow { fill: none; stroke: #a9aec9; stroke-width: 3.200; }
.trail { fill: none; stroke: #4a9c50; stroke-width: 1.800; }
.label-campus { font: 500 36.500px Roboto, sans-serif; fill: #4f7488; stroke: #fff; stroke-width: 4; paint-order: stroke; text-anchor: middle; }
.label-poi { font: 400 28px Roboto, sans-serif; fill: #3a8742; stroke: #fff; stroke-width: 3; paint-order: stroke; }
.label-mid { text-anchor: middle; }
.label-road { font: 500 22px Roboto, sans-serif; fill: #5f6b75; stroke: #fff; stroke-width: 3; paint-order: stroke; }
.pin { fill: #52a356; stroke: #3f8a46; stroke-width: 1.500; }
.pin-hole { fill: #fff; }
.google { font: 500 36px "Liberation Sans", sans-serif; stroke: #fff; stroke-width: 3; paint-order: stroke; }
.g-blue { fill: #4285f4; }
.g-red { fill: #ea4335; }
.g-yellow { fill: #fbbc05; }
.g-green { fill: #34a853; }

.map-type { position: absolute; left: 20px; top: 20px; height: 80px; display: flex; background: #fff; border-radius: 4px; box-shadow: 0 2px 5px rgba(0,0,0,.2); font-size: 36px; }
.map-tab { display: flex; align-items: center; justify-content: center; }
.map-tab-on { width: 139px; font-weight: 500; color: #000; }
.map-tab-sat { width: 197px; color: #565656; border-left: 1px solid #ebebeb; }
.map-btn { position: absolute; left: 700px; width: 80px; background: #fff; border-radius: 4px; box-shadow: 0 2px 5px rgba(0,0,0,.2); }
.map-btn svg { display: block; }
.map-full { top: 20px; height: 80px; }
.map-peg { top: 246px; height: 80px; }
.map-zoom { top: 390px; height: 162px; }
.glyph { fill: #666; }
.map-foot { position: absolute; right: 0; bottom: 0; height: 28px; display: flex; gap: 2px; font-size: 20px; color: #1a1a1a; line-height: 28px; white-space: nowrap; }
.map-foot span { background: rgba(255,255,255,.6); text-align: center; }
.foot-k { width: 195px; padding-right: 2px; }
.foot-d { width: 172px; padding-right: 2px; }
.foot-t { width: 77px; }
.foot-r { width: 189px; }
```
